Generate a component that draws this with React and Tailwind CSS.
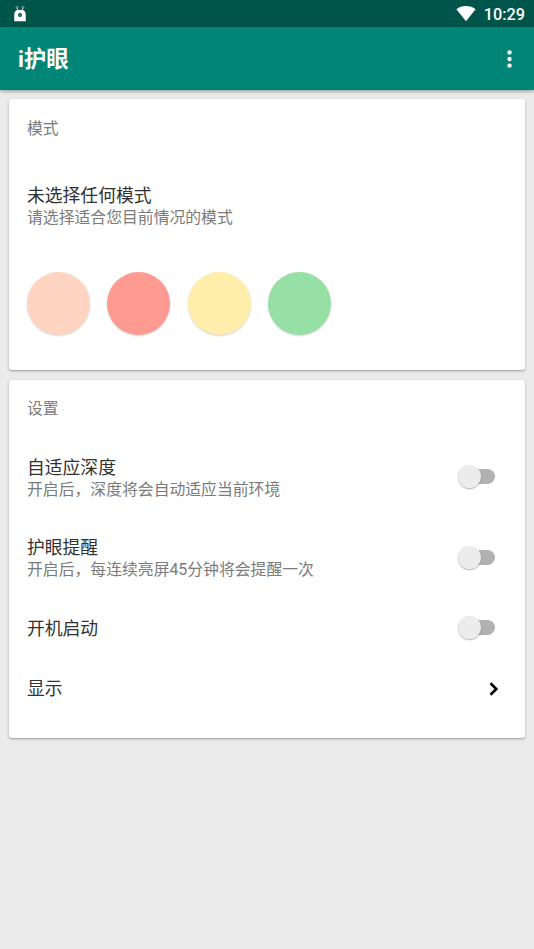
import { useState } from 'react';

const MODES = [
  { id: 'warm', className: 'bg-[#ffd5c2]' },
  { id: 'red', className: 'bg-[#fd9a92]' },
  { id: 'yellow', className: 'bg-[#ffeeab]' },
  { id: 'green', className: 'bg-[#97e0a5]' },
];

const CARD = 'bg-white rounded-[3px] shadow-[0_1px_3px_rgba(0,0,0,0.26),0_1px_1px_rgba(0,0,0,0.12)]';

function StatusBar() {
  return (
    <div className="h-[27px] bg-[#00554b] flex items-center justify-between pl-3.5 pr-[9px]">
      <svg className="w-3 h-4" viewBox="0 0 12 16" fill="none">
        <path d="M4.1 4.6L3.4 2.2M7.9 4.6l.7-2.4" stroke="#b9d5d2" strokeWidth="0.9" />
        <circle cx="3.1" cy="1.5" r="1" stroke="#a9cbc7" strokeWidth="0.8" />
        <circle cx="8.9" cy="1.5" r="1" stroke="#a9cbc7" strokeWidth="0.8" />
        <path d="M.2 15.200V8.400Q.6 3.900 3.800 3.900h4.400q3.200 0 3.600 4.500v6.800z" fill="#fff" />
        <circle cx="6" cy="9" r="2" fill="#00554b" />
        <circle cx="6" cy="9" r="0.7" fill="#7faaa5" />
      </svg>
      <div className="flex items-center gap-2">
        <svg className="w-5 h-4" viewBox="0 0 20 16" fill="#fff">
          <path d="M10 15.200L.4 3.300Q4.600 0 10 0t9.600 3.300z" />
        </svg>
        <span className="text-[16.300px] leading-[27px] font-medium text-white pt-[2px]">10:29</span>
      </div>
    </div>
  );
}

function Toolbar() {
  return (
    <header className="h-[63px] bg-[#008577] flex items-center justify-between pl-[18px] pr-[22px] shadow-[0_1px_4px_rgba(0,0,0,0.4)]">
      <h1 className="text-[22.300px] leading-[28px] font-bold text-white">i护眼</h1>
      <svg className="w-[5px] h-[18px]" viewBox="0 0 5 18" fill="#fff">
        <circle cx="2.5" cy="2.400" r="2.200" />
        <circle cx="2.5" cy="9" r="2.200" />
        <circle cx="2.5" cy="15.600" r="2.200" />
      </svg>
    </header>
  );
}

function RowText({ title, summary }) {
  return (
    <div>
      <p className="text-[17.800px] leading-[22px] text-[#323232]">{title}</p>
      {summary && <p className="text-[15.830px] leading-[21px] text-[#7b7b7b]">{summary}</p>}
    </div>
  );
}

function Toggle() {
  const [on, setOn] = useState(false);

  return (
    <button
      type="button"
      role="switch"
      aria-checked={on}
      onClick={() => setOn(!on)}
      className="w-[37.500px] h-6 flex items-center mr-3 mb-[3px]"
    >
      <span className={`w-full h-[15px] rounded-full flex items-center ${on ? 'justify-end bg-[#80c2bb]' : 'bg-[#b1b1b1]'}`}>
        <span className={`size-[23px] shrink-0 rounded-full shadow-[0_1px_1.5px_rgba(0,0,0,0.28)] ${on ? 'bg-[#008577]' : 'bg-[#ececec]'}`} />
      </span>
    </button>
  );
}

function ToggleRow({ title, summary }) {
  return (
    <div className={`flex items-center justify-between ${summary ? 'h-[80.400px]' : 'h-[60px]'}`}>
      <RowText title={title} summary={summary} />
      <Toggle />
    </div>
  );
}

export default function App() {
  return (
    <div className="min-h-screen bg-[#ebebeb] font-['Roboto','Noto_Sans_CJK_SC',sans-serif]">
      <StatusBar />
      <Toolbar />

      <main className="px-[9px] pt-[9px] flex flex-col gap-[10px]">
        {/* Mode picker */}
        <section className={`${CARD} h-[271px] px-[18px] pt-[19px]`}>
          <h2 className="text-[15.800px] leading-[21px] text-[#7b7b7b]">模式</h2>
          <div className="pt-[46px]">
            <RowText title="未选择任何模式" summary="请选择适合您目前情况的模式" />
          </div>
          <div className="flex gap-[17.500px] pt-11 -ml-[0.500px]">
            {MODES.map((mode) => (
              <button
                key={mode.id}
                type="button"
                aria-label={mode.id}
                className={`size-[63px] rounded-full shadow-[0_1px_2px_rgba(0,0,0,0.18)] ${mode.className}`}
              />
            ))}
          </div>
        </section>

        {/* Settings */}
        <section className={`${CARD} h-[357.500px] px-[18px] pt-[18px]`}>
          <h2 className="text-[15.800px] leading-[21px] text-[#7b7b7b]">设置</h2>
          <div className="pt-[19px]">
            <ToggleRow title="自适应深度" summary="开启后，深度将会自动适应当前环境" />
            <ToggleRow title="护眼提醒" summary="开启后，每连续亮屏45分钟将会提醒一次" />
            <ToggleRow title="开机启动" />
            <div className="h-[60px] flex items-center justify-between">
              <RowText title="显示" />
              <svg className="w-2.5 h-3.5 mr-2" viewBox="0 0 10 14" fill="none" stroke="#000" strokeWidth="2.600">
                <path d="M1.500 1.300L7.300 7 1.500 12.700" />
              </svg>
            </div>
          </div>
        </section>
      </main>
    </div>
  );
}
